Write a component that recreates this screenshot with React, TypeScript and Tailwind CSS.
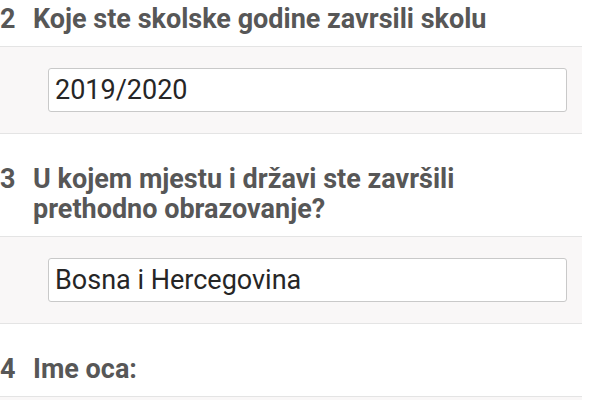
const questions = [
  { num: '2', label: 'Koje ste skolske godine zavrsili skolu', value: '2019/2020' },
  { num: '3', label: 'U kojem mjestu i državi ste završili prethodno obrazovanje?', value: 'Bosna i Hercegovina' },
  { num: '4', label: 'Ime oca:', value: '' },
]

export default function App() {
  return (
    <div
      className="w-[600px] h-[400px] overflow-hidden bg-white"
      style={{ fontFamily: 'Roboto, "Noto Sans", sans-serif' }}
    >
      {questions.map((q, i) => (
        <Question key={q.num} q={q} first={i === 0} />
      ))}
    </div>
  )
}

function Question({ q, first }: { q: { num: string; label: string; value: string }; first: boolean }) {
  return (
    <div className={first ? 'pt-[4px]' : 'pt-[30px]'}>
      <div className="flex text-[27px] leading-[30px] font-bold text-[#575757]">
        <span className="w-[33px] shrink-0">{q.num}</span>
        <span className="w-[460px]">{q.label}</span>
      </div>
      <div className="mt-[12px] w-[582px] border-y border-[#e4e4e4] bg-[#f9f7f7] pl-[48px] pr-[15px] py-[21px]">
        <div className="h-[44px] flex items-center rounded-[3px] border border-[#c9c9c9] bg-white px-[6px] text-[27px] text-[#262626]">
          {q.value}
        </div>
      </div>
    </div>
  )
}
